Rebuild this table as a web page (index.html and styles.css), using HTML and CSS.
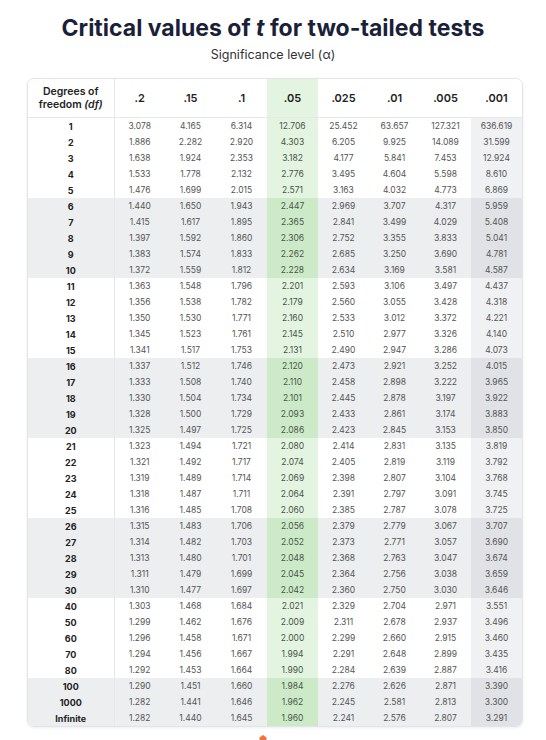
FILE: index.html
```html
<!DOCTYPE html>
<html lang="en">
<head>
<meta charset="utf-8">
<title>Critical values of t for two-tailed tests</title>
<link rel="stylesheet" href="styles.css">
</head>
<body>
<h1 class="title">Critical values of <em>t</em> for two-tailed tests</h1>
<p class="subtitle">Significance level (α)</p>
<div class="card">
<table>
<colgroup><col class="c-df"><col><col><col><col><col><col><col><col></colgroup>
<thead>
<tr><th class="dfh">Degrees of<br>freedom <em>(df)</em></th><th>.2</th><th>.15</th><th>.1</th><th class="g">.05</th><th>.025</th><th>.01</th><th>.005</th><th class="hw">.001</th></tr>
</thead>
<tbody>
<tr class="first"><td class="d">1</td><td>3.078</td><td>4.165</td><td>6.314</td><td class="g">12.706</td><td>25.452</td><td>63.657</td><td>127.321</td><td class="h">636.619</td></tr>
<tr><td class="d">2</td><td>1.886</td><td>2.282</td><td>2.920</td><td class="g">4.303</td><td>6.205</td><td>9.925</td><td>14.089</td><td class="h">31.599</td></tr>
<tr><td class="d">3</td><td>1.638</td><td>1.924</td><td>2.353</td><td class="g">3.182</td><td>4.177</td><td>5.841</td><td>7.453</td><td class="h">12.924</td></tr>
<tr><td class="d">4</td><td>1.533</td><td>1.778</td><td>2.132</td><td class="g">2.776</td><td>3.495</td><td>4.604</td><td>5.598</td><td class="h">8.610</td></tr>
<tr><td class="d">5</td><td>1.476</td><td>1.699</td><td>2.015</td><td class="g">2.571</td><td>3.163</td><td>4.032</td><td>4.773</td><td class="h">6.869</td></tr>
</tbody>
<tbody class="alt">
<tr><td class="d">6</td><td>1.440</td><td>1.650</td><td>1.943</td><td class="g">2.447</td><td>2.969</td><td>3.707</td><td>4.317</td><td class="h">5.959</td></tr>
<tr><td class="d">7</td><td>1.415</td><td>1.617</td><td>1.895</td><td class="g">2.365</td><td>2.841</td><td>3.499</td><td>4.029</td><td class="h">5.408</td></tr>
<tr><td class="d">8</td><td>1.397</td><td>1.592</td><td>1.860</td><td class="g">2.306</td><td>2.752</td><td>3.355</td><td>3.833</td><td class="h">5.041</td></tr>
<tr><td class="d">9</td><td>1.383</td><td>1.574</td><td>1.833</td><td class="g">2.262</td><td>2.685</td><td>3.250</td><td>3.690</td><td class="h">4.781</td></tr>
<tr><td class="d">10</td><td>1.372</td><td>1.559</td><td>1.812</td><td class="g">2.228</td><td>2.634</td><td>3.169</td><td>3.581</td><td class="h">4.587</td></tr>
</tbody>
<tbody>
<tr><td class="d">11</td><td>1.363</td><td>1.548</td><td>1.796</td><td class="g">2.201</td><td>2.593</td><td>3.106</td><td>3.497</td><td class="h">4.437</td></tr>
<tr><td class="d">12</td><td>1.356</td><td>1.538</td><td>1.782</td><td class="g">2.179</td><td>2.560</td><td>3.055</td><td>3.428</td><td class="h">4.318</td></tr>
<tr><td class="d">13</td><td>1.350</td><td>1.530</td><td>1.771</td><td class="g">2.160</td><td>2.533</td><td>3.012</td><td>3.372</td><td class="h">4.221</td></tr>
<tr><td class="d">14</td><td>1.345</td><td>1.523</td><td>1.761</td><td class="g">2.145</td><td>2.510</td><td>2.977</td><td>3.326</td><td class="h">4.140</td></tr>
<tr><td class="d">15</td><td>1.341</td><td>1.517</td><td>1.753</td><td class="g">2.131</td><td>2.490</td><td>2.947</td><td>3.286</td><td class="h">4.073</td></tr>
</tbody>
<tbody class="alt">
<tr><td class="d">16</td><td>1.337</td><td>1.512</td><td>1.746</td><td class="g">2.120</td><td>2.473</td><td>2.921</td><td>3.252</td><td class="h">4.015</td></tr>
<tr><td class="d">17</td><td>1.333</td><td>1.508</td><td>1.740</td><td class="g">2.110</td><td>2.458</td><td>2.898</td><td>3.222</td><td class="h">3.965</td></tr>
<tr><td class="d">18</td><td>1.330</td><td>1.504</td><td>1.734</td><td class="g">2.101</td><td>2.445</td><td>2.878</td><td>3.197</td><td class="h">3.922</td></tr>
<tr><td class="d">19</td><td>1.328</td><td>1.500</td><td>1.729</td><td class="g">2.093</td><td>2.433</td><td>2.861</td><td>3.174</td><td class="h">3.883</td></tr>
<tr><td class="d">20</td><td>1.325</td><td>1.497</td><td>1.725</td><td class="g">2.086</td><td>2.423</td><td>2.845</td><td>3.153</td><td class="h">3.850</td></tr>
</tbody>
<tbody>
<tr><td class="d">21</td><td>1.323</td><td>1.494</td><td>1.721</td><td class="g">2.080</td><td>2.414</td><td>2.831</td><td>3.135</td><td class="h">3.819</td></tr>
<tr><td class="d">22</td><td>1.321</td><td>1.492</td><td>1.717</td><td class="g">2.074</td><td>2.405</td><td>2.819</td><td>3.119</td><td class="h">3.792</td></tr>
<tr><td class="d">23</td><td>1.319</td><td>1.489</td><td>1.714</td><td class="g">2.069</td><td>2.398</td><td>2.807</td><td>3.104</td><td class="h">3.768</td></tr>
<tr><td class="d">24</td><td>1.318</td><td>1.487</td><td>1.711</td><td class="g">2.064</td><td>2.391</td><td>2.797</td><td>3.091</td><td class="h">3.745</td></tr>
<tr><td class="d">25</td><td>1.316</td><td>1.485</td><td>1.708</td><td class="g">2.060</td><td>2.385</td><td>2.787</td><td>3.078</td><td class="h">3.725</td></tr>
</tbody>
<tbody class="alt">
<tr><td class="d">26</td><td>1.315</td><td>1.483</td><td>1.706</td><td class="g">2.056</td><td>2.379</td><td>2.779</td><td>3.067</td><td class="h">3.707</td></tr>
<tr><td class="d">27</td><td>1.314</td><td>1.482</td><td>1.703</td><td class="g">2.052</td><td>2.373</td><td>2.771</td><td>3.057</td><td class="h">3.690</td></tr>
<tr><td class="d">28</td><td>1.313</td><td>1.480</td><td>1.701</td><td class="g">2.048</td><td>2.368</td><td>2.763</td><td>3.047</td><td class="h">3.674</td></tr>
<tr><td class="d">29</td><td>1.311</td><td>1.479</td><td>1.699</td><td class="g">2.045</td><td>2.364</td><td>2.756</td><td>3.038</td><td class="h">3.659</td></tr>
<tr><td class="d">30</td><td>1.310</td><td>1.477</td><td>1.697</td><td class="g">2.042</td><td>2.360</td><td>2.750</td><td>3.030</td><td class="h">3.646</td></tr>
</tbody>
<tbody>
<tr><td class="d">40</td><td>1.303</td><td>1.468</td><td>1.684</td><td class="g">2.021</td><td>2.329</td><td>2.704</td><td>2.971</td><td class="h">3.551</td></tr>
<tr><td class="d">50</td><td>1.299</td><td>1.462</td><td>1.676</td><td class="g">2.009</td><td>2.311</td><td>2.678</td><td>2.937</td><td class="h">3.496</td></tr>
<tr><td class="d">60</td><td>1.296</td><td>1.458</td><td>1.671</td><td class="g">2.000</td><td>2.299</td><td>2.660</td><td>2.915</td><td class="h">3.460</td></tr>
<tr><td class="d">70</td><td>1.294</td><td>1.456</td><td>1.667</td><td class="g">1.994</td><td>2.291</td><td>2.648</td><td>2.899</td><td class="h">3.435</td></tr>
<tr><td class="d">80</td><td>1.292</td><td>1.453</td><td>1.664</td><td class="g">1.990</td><td>2.284</td><td>2.639</td><td>2.887</td><td class="h">3.416</td></tr>
</tbody>
<tbody class="alt">
<tr><td class="d">100</td><td>1.290</td><td>1.451</td><td>1.660</td><td class="g">1.984</td><td>2.276</td><td>2.626</td><td>2.871</td><td class="h">3.390</td></tr>
<tr><td class="d">1000</td><td>1.282</td><td>1.441</td><td>1.646</td><td class="g">1.962</td><td>2.245</td><td>2.581</td><td>2.813</td><td class="h">3.300</td></tr>
<tr><td class="d">Infinite</td><td>1.282</td><td>1.440</td><td>1.645</td><td class="g">1.960</td><td>2.241</td><td>2.576</td><td>2.807</td><td class="h">3.291</td></tr>
</tbody>
</table>
</div>
<div class="foot">
<svg class="logo" width="10" height="10" viewBox="0 0 10 10" aria-hidden="true"><path d="M5 1 L8.5 3.5 L8.5 9 L1.5 9 L1.5 3.5 Z" fill="#f0733a"/></svg>
</div>
</body>
</html>
```

FILE: styles.css
```css
html, body {
  margin: 0;
  padding: 0;
  background: #ffffff;
}
body {
  font-family: Inter, "Noto Sans", "DejaVu Sans", sans-serif;
  color: #222;
}
.title {
  margin: 13px 0 0;
  text-align: center;
  font-size: 23px;
  line-height: 30px;
  font-weight: 700;
  color: #1b1f3a;
  letter-spacing: 0;
}
.title em {
  font-style: italic;
}
.subtitle {
  margin: 4px 0 0;
  text-align: center;
  font-size: 12.5px;
  line-height: 16px;
  color: #333;
}
.card {
  margin: 15px 0 0 27px;
  width: 496px;
  box-sizing: border-box;
  border: 1px solid #e2e4e8;
  border-radius: 7px;
  overflow: hidden;
  box-shadow: 0 1px 3px rgba(0, 0, 0, 0.07);
}
table {
  width: 100%;
  border-collapse: collapse;
  table-layout: fixed;
}
.c-df {
  width: 86px;
}
thead th {
  height: 38px;
  padding: 0;
  border-bottom: 1px solid #e6e8eb;
  font-size: 11px;
  font-weight: 600;
  color: #222;
  text-align: center;
  background: #ffffff;
}
thead th.dfh {
  font-size: 10.5px;
  line-height: 13px;
  border-right: 1px solid #e6e8eb;
}
thead th.dfh em {
  font-style: italic;
}
thead th.g {
  background: #e3f4e0;
}
td {
  height: 16px;
  padding: 0;
  text-align: center;
  font-size: 8.5px;
  color: #555;
  background: #ffffff;
}
td.d {
  font-size: 9px;
  font-weight: 700;
  color: #222;
  border-right: 1px solid #e6e8eb;
}
td.g {
  background: #e3f4e0;
  color: #4a554a;
}
td.h {
  background: #f0f1f3;
}
.alt td {
  background: #eceef0;
}
.alt td.g {
  background: #cdeac8;
}
.alt td.h {
  background: #e0e2e5;
}
.foot {
  display: flex;
  justify-content: center;
  padding: 7px 20px 0 0;
}
.logo {
  display: block;
}
```
